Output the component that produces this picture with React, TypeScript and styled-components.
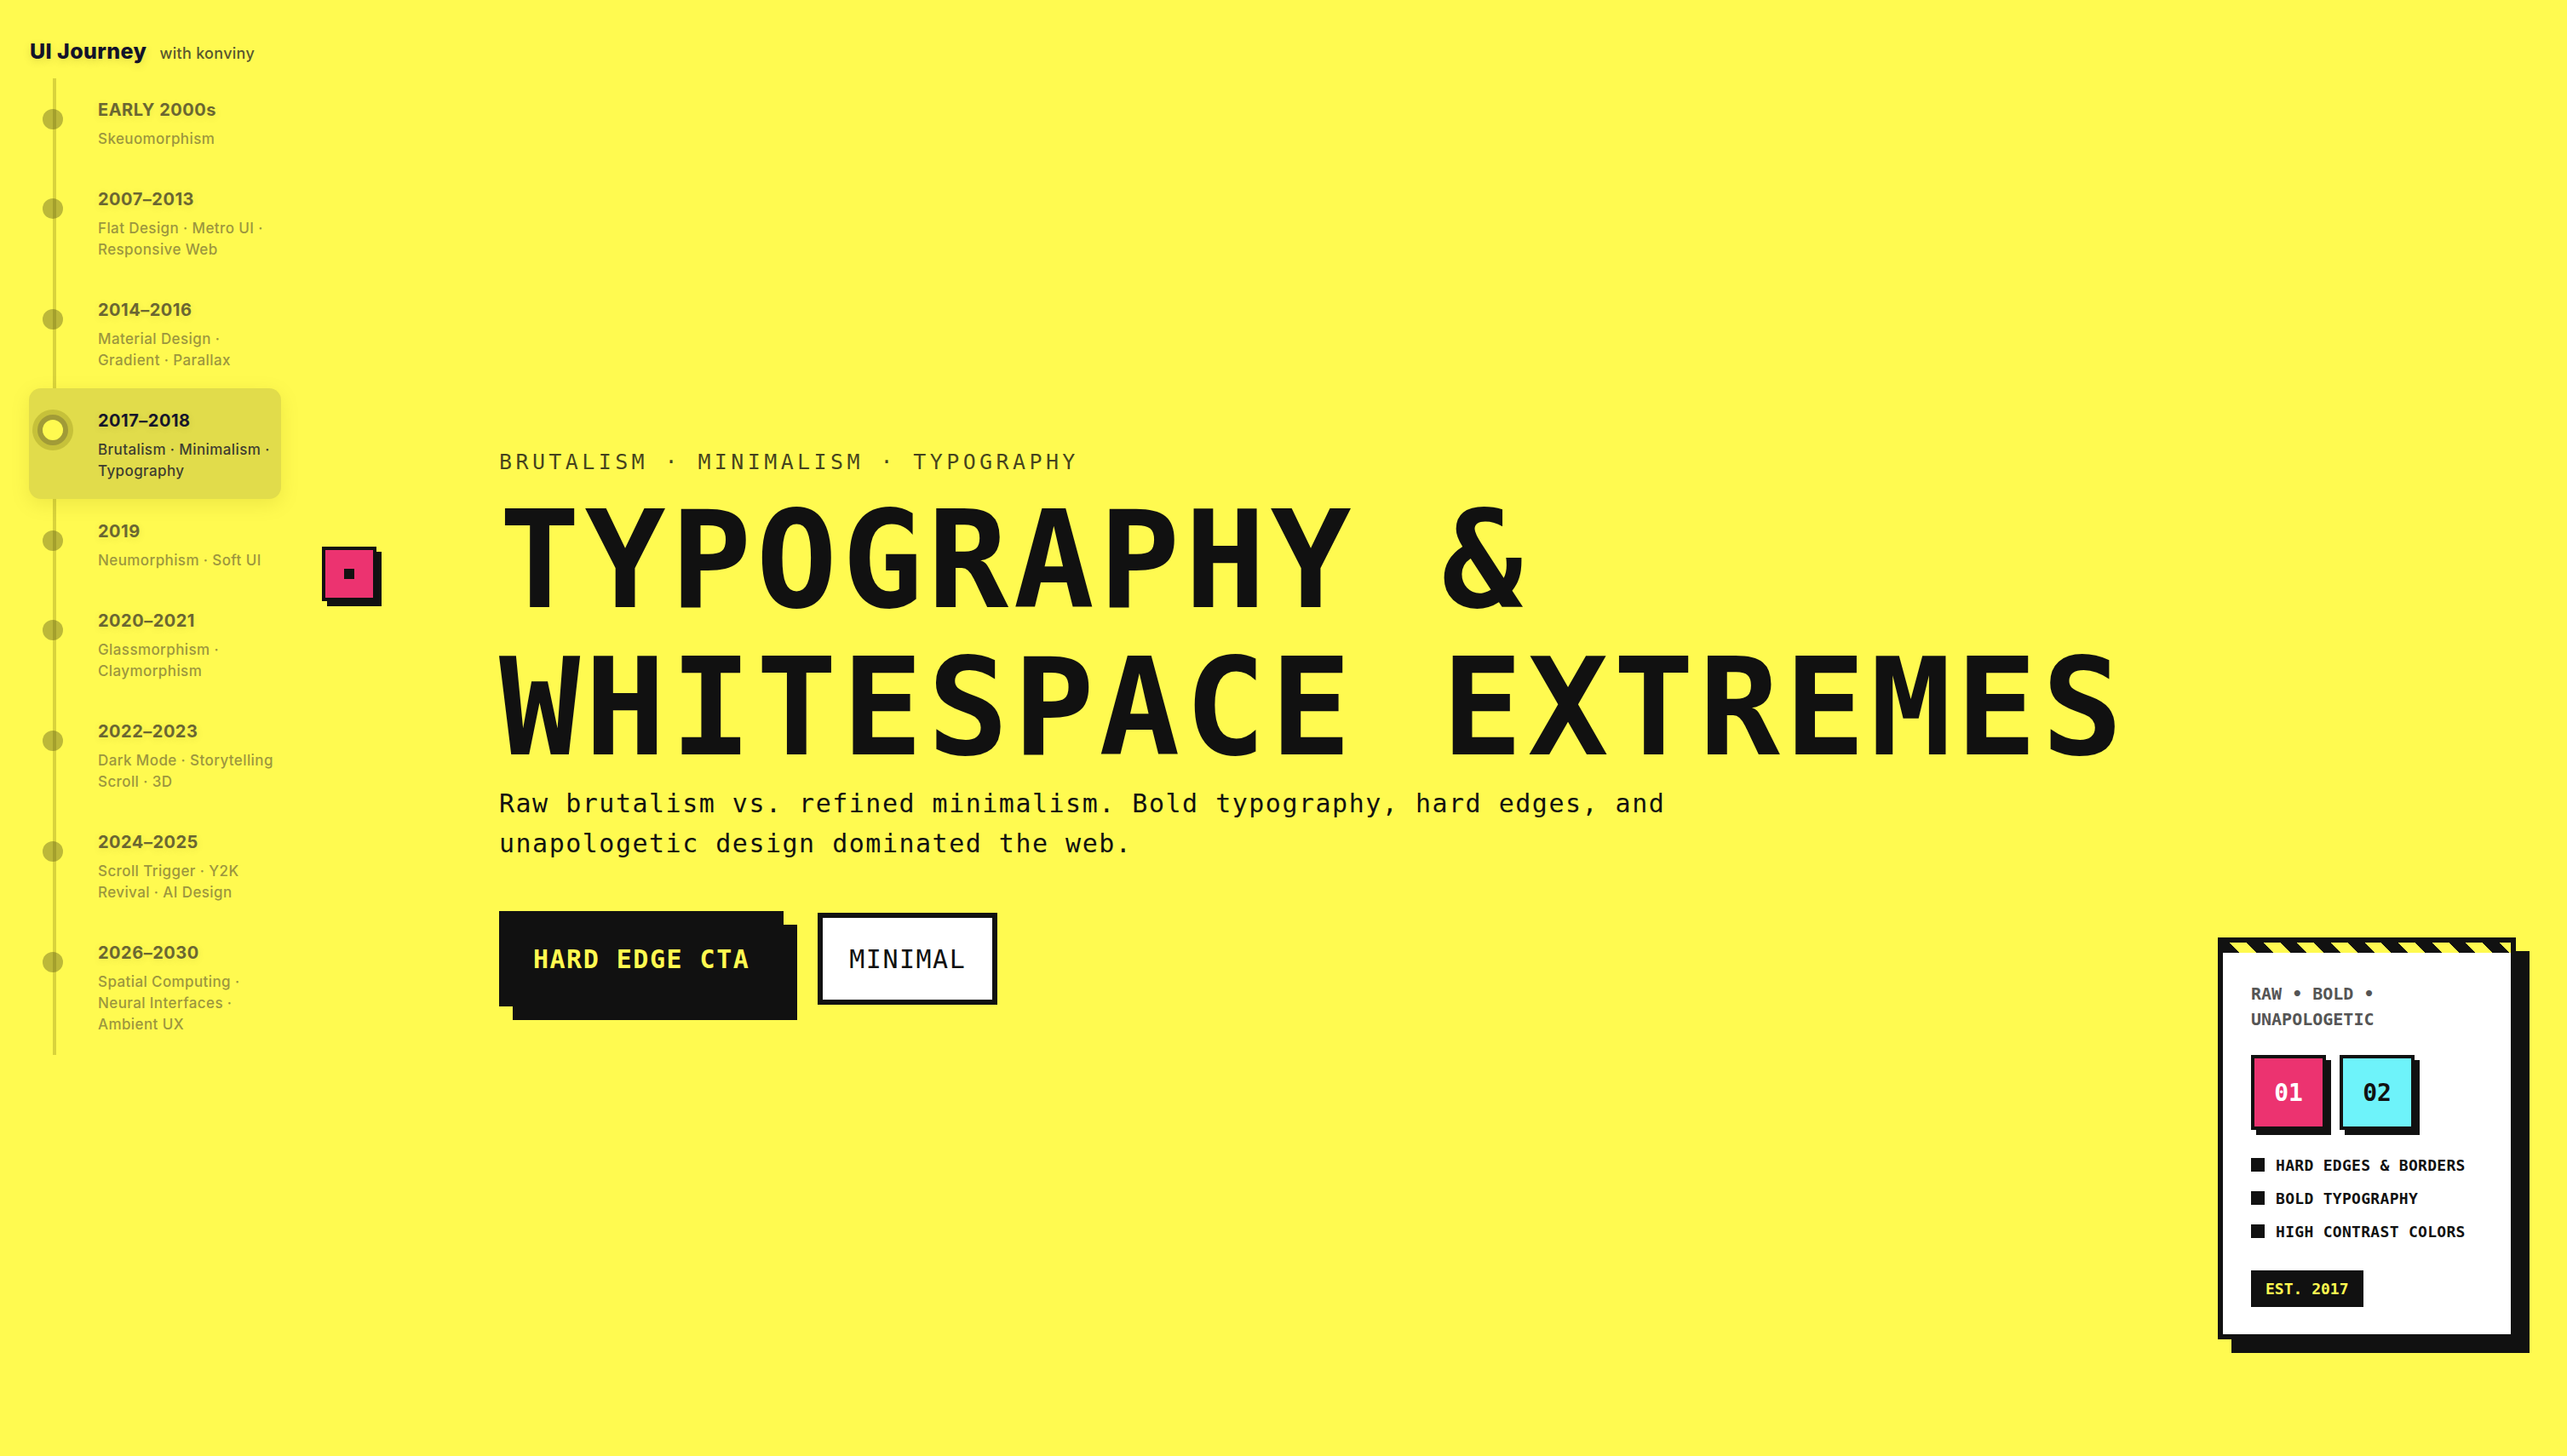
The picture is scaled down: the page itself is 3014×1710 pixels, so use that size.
import React from 'react'
import styled, { createGlobalStyle } from 'styled-components'

const YELLOW = '#FFFA50'
const INK = '#111111'
const MONO = `"DejaVu Sans Mono", "Liberation Mono", monospace`

const GlobalStyle = createGlobalStyle`
  html, body { margin: 0; padding: 0; }
  body {
    background: ${YELLOW};
    font-family: Inter, "Noto Sans", sans-serif;
    color: ${INK};
  }
  * { box-sizing: border-box; }
`

const eras = [
  { years: 'EARLY 2000s', tags: ['Skeuomorphism'] },
  { years: '2007–2013', tags: ['Flat Design · Metro UI ·', 'Responsive Web'] },
  { years: '2014–2016', tags: ['Material Design ·', 'Gradient · Parallax'] },
  { years: '2017–2018', tags: ['Brutalism · Minimalism ·', 'Typography'], active: true },
  { years: '2019', tags: ['Neumorphism · Soft UI'] },
  { years: '2020–2021', tags: ['Glassmorphism ·', 'Claymorphism'] },
  { years: '2022–2023', tags: ['Dark Mode · Storytelling', 'Scroll · 3D'] },
  { years: '2024–2025', tags: ['Scroll Trigger · Y2K', 'Revival · AI Design'] },
  { years: '2026–2030', tags: ['Spatial Computing ·', 'Neural Interfaces ·', 'Ambient UX'] },
]

const features = ['HARD EDGES & BORDERS', 'BOLD TYPOGRAPHY', 'HIGH CONTRAST COLORS']

function App() {
  return (
    <>
      <GlobalStyle />
      <Page>
        <Sidebar>
          <Brand>
            <BrandName>UI Journey</BrandName>
            <BrandBy>with konviny</BrandBy>
          </Brand>
          <Timeline>
            {eras.map(era => (
              <Era key={era.years} $active={era.active}>
                <DotCell>
                  <Dot $active={era.active} />
                </DotCell>
                <EraYears $active={era.active}>{era.years}</EraYears>
                <EraTags $active={era.active}>
                  {era.tags.map(t => (
                    <span key={t}>{t}</span>
                  ))}
                </EraTags>
              </Era>
            ))}
          </Timeline>
        </Sidebar>

        <Main>
          <PinkBlock>
            <PinkDot />
          </PinkBlock>

          <Hero>
            <Eyebrow>BRUTALISM · MINIMALISM · TYPOGRAPHY</Eyebrow>
            <Headline>
              TYPOGRAPHY &amp;
              <br />
              WHITESPACE EXTREMES
            </Headline>
            <Lead>
              Raw brutalism vs. refined minimalism. Bold typography, hard edges, and unapologetic
              design dominated the web.
            </Lead>
            <Actions>
              <HardButton>HARD EDGE CTA</HardButton>
              <MinimalButton>MINIMAL</MinimalButton>
            </Actions>
          </Hero>

          <Card>
            <Stripes />
            <CardBody>
              <CardKicker>RAW • BOLD • UNAPOLOGETIC</CardKicker>
              <Tiles>
                <Tile $bg="#EC3370" $fg="#ffffff">01</Tile>
                <Tile $bg="#6EF3FA" $fg={INK}>02</Tile>
              </Tiles>
              <FeatureList>
                {features.map(f => (
                  <Feature key={f}>
                    <Bullet />
                    {f}
                  </Feature>
                ))}
              </FeatureList>
              <Badge>EST. 2017</Badge>
            </CardBody>
          </Card>
        </Main>
      </Page>
    </>
  )
}

export default App

const Page = styled.div`
  display: flex;
  min-height: 1710px;
  background: ${YELLOW};
`

/* ---------- sidebar ---------- */

const Sidebar = styled.aside`
  width: 360px;
  flex-shrink: 0;
  padding: 45px 30px 0 34px;
`

const Brand = styled.div`
  display: flex;
  align-items: baseline;
  gap: 15px;
  padding-left: 1px;
  height: 46px;
`

const BrandName = styled.span`
  font-size: 25px;
  line-height: 30px;
  font-weight: 800;
  color: #12122a;
  letter-spacing: 0.4px;
  text-shadow: 0 3px 10px rgba(90, 85, 0, 0.18);
`

const BrandBy = styled.span`
  font-size: 18px;
  font-weight: 500;
  color: #58562f;
  letter-spacing: 0.3px;
`

const Timeline = styled.ul`
  position: relative;
  list-style: none;
  margin: 0;
  padding: 0;

  &::before {
    content: '';
    position: absolute;
    left: 28px;
    top: 1px;
    bottom: -3px;
    width: 4px;
    background: rgba(120, 112, 10, 0.28);
  }
`

const Era = styled.li<{ $active?: boolean }>`
  position: relative;
  display: grid;
  grid-template-columns: 48px 1fr;
  grid-template-rows: auto auto;
  column-gap: 29px;
  padding: 24px 16px 20px 4px;
  border-radius: 14px;
  background: ${p => (p.$active ? '#E1DC4B' : 'transparent')};
  box-shadow: ${p => (p.$active ? '0 6px 22px rgba(130, 120, 0, 0.14)' : 'none')};
`

const DotCell = styled.div`
  grid-row: 1 / span 2;
  display: flex;
  justify-content: center;
  align-items: flex-start;
`

const Dot = styled.span<{ $active?: boolean }>`
  display: block;
  border-radius: 50%;
  ${p =>
    p.$active
      ? `
    width: 36px;
    height: 36px;
    margin-top: 7px;
    background: ${YELLOW};
    border: 6px solid #A19B37;
    box-shadow: 0 0 0 6px rgba(150, 142, 30, 0.35);
  `
      : `
    width: 24px;
    height: 24px;
    margin-top: 13px;
    background: rgba(80, 75, 20, 0.38);
  `}
`

const EraYears = styled.div<{ $active?: boolean }>`
  font-size: 20px;
  line-height: 29px;
  font-weight: 700;
  letter-spacing: 0.5px;
  color: ${p => (p.$active ? '#16162A' : '#6A6632')};
  text-shadow: 0 2px 8px rgba(90, 85, 0, 0.12);
  white-space: nowrap;
`

const EraTags = styled.div<{ $active?: boolean }>`
  display: flex;
  flex-direction: column;
  margin-top: 7px;
  font-size: 17px;
  line-height: 25px;
  font-weight: 500;
  letter-spacing: 0.4px;
  color: ${p => (p.$active ? '#3E3D30' : '#9C963E')};
  white-space: nowrap;
`

/* ---------- main ---------- */

const Main = styled.main`
  position: relative;
  flex: 1;
  display: grid;
  grid-template-columns: 1fr auto;
  grid-template-rows: 1fr auto;
  padding-left: 226px;
`

const PinkBlock = styled.div`
  position: absolute;
  left: 18px;
  top: 642px;
  width: 64px;
  height: 64px;
  display: flex;
  align-items: center;
  justify-content: center;
  background: #EC3370;
  border: 4px solid ${INK};
  box-shadow: 6px 6px 0 ${INK};
`

const PinkDot = styled.span`
  width: 12px;
  height: 12px;
  background: ${INK};
`

const Hero = styled.section`
  grid-column: 1;
  grid-row: 1 / span 2;
  align-self: center;
  font-family: ${MONO};
`

const Eyebrow = styled.div`
  font-size: 25px;
  line-height: 30px;
  letter-spacing: 4.4px;
  color: rgba(17, 17, 17, 0.8);
  margin-bottom: 14px;
`

const Headline = styled.h1`
  margin: 0;
  font-size: 158px;
  line-height: 173px;
  font-weight: 700;
  letter-spacing: 5.5px;
  color: ${INK};
  white-space: nowrap;
`

const Lead = styled.p`
  margin: 2px 0 0;
  max-width: 1420px;
  font-size: 30px;
  line-height: 47px;
  letter-spacing: 1.5px;
  color: ${INK};
`

const Actions = styled.div`
  display: flex;
  align-items: center;
  gap: 40px;
  margin-top: 56px;
`

const HardButton = styled.button`
  height: 112px;
  padding: 0 40px;
  border: none;
  background: ${INK};
  color: ${YELLOW};
  font-family: ${MONO};
  font-size: 30px;
  font-weight: 700;
  letter-spacing: 1.5px;
  box-shadow: 16px 16px 0 ${INK};
`

const MinimalButton = styled.button`
  height: 108px;
  padding: 0 31px;
  border: 6px solid ${INK};
  background: #ffffff;
  color: ${INK};
  font-family: ${MONO};
  font-size: 30px;
  font-weight: 400;
  letter-spacing: 1.5px;
`

/* ---------- card ---------- */

const Card = styled.aside`
  grid-column: 2;
  grid-row: 2;
  align-self: end;
  width: 350px;
  margin: 0 60px 137px 0;
  background: #ffffff;
  border: 6px solid ${INK};
  box-shadow: 16px 16px 0 ${INK};
  font-family: ${MONO};
`

const Stripes = styled.div`
  height: 12px;
  background: repeating-linear-gradient(
    45deg,
    ${INK} 0 14px,
    ${YELLOW} 14px 28px
  );
`

const CardBody = styled.div`
  padding: 33px 33px 32px;
`

const CardKicker = styled.div`
  font-size: 20px;
  line-height: 30px;
  font-weight: 700;
  color: #555555;
`

const Tiles = styled.div`
  display: flex;
  gap: 16px;
  margin-top: 27px;
`

const Tile = styled.div<{ $bg: string; $fg: string }>`
  width: 88px;
  height: 88px;
  display: flex;
  align-items: center;
  justify-content: center;
  background: ${p => p.$bg};
  color: ${p => p.$fg};
  border: 4px solid ${INK};
  box-shadow: 6px 6px 0 ${INK};
  font-size: 28px;
  font-weight: 700;
`

const FeatureList = styled.ul`
  list-style: none;
  margin: 30px 0 0;
  padding: 0;
  display: flex;
  flex-direction: column;
  gap: 17px;
`

const Feature = styled.li`
  display: flex;
  align-items: center;
  gap: 13px;
  height: 22px;
  font-size: 18px;
  font-weight: 700;
  letter-spacing: 0.3px;
  color: ${INK};
  white-space: nowrap;
`

const Bullet = styled.span`
  width: 16px;
  height: 16px;
  flex-shrink: 0;
  background: ${INK};
`

const Badge = styled.div`
  display: inline-flex;
  align-items: center;
  height: 43px;
  margin-top: 35px;
  padding: 0 17px;
  background: ${INK};
  color: ${YELLOW};
  font-size: 18px;
  font-weight: 700;
`
